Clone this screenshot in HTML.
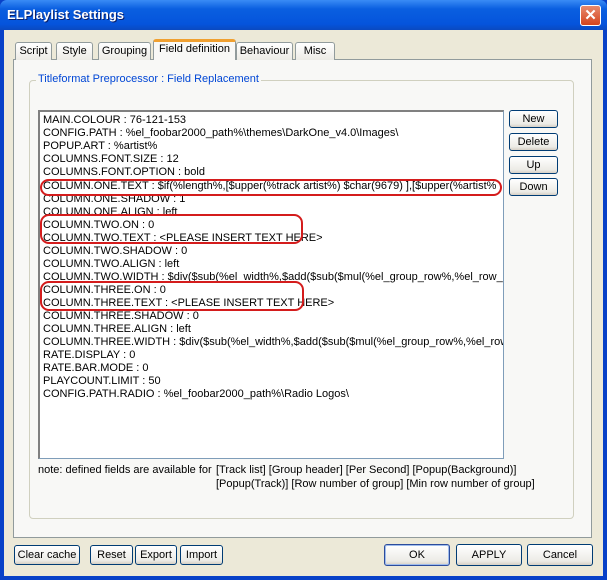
<!DOCTYPE html>
<html><head><style>
*{margin:0;padding:0;box-sizing:border-box}
body{width:607px;height:580px;background:#0841c8;font-family:"Liberation Sans",sans-serif;font-size:11px;position:relative;overflow:hidden}
.win{position:absolute;left:4px;top:30px;width:599px;height:546px;background:#ECE9D8}
.title{position:absolute;left:0;top:0;width:607px;height:30px;background:linear-gradient(#3a8cf5,#0a5fe0 30%,#0554dc 80%,#0a49c0);border-radius:7px 7px 0 0}
.title span{position:absolute;left:7px;top:7px;color:#fff;font-weight:bold;font-size:13px;text-shadow:1px 1px #0a1f6a}
.close{position:absolute;left:580px;top:5px;width:21px;height:21px;background:linear-gradient(#e88a6e,#d4441d);border:1px solid #fff;border-radius:3px;color:#fff;font-weight:bold;font-size:15px;text-align:center;line-height:19px}
.a{position:absolute}
.tab{position:absolute;top:42px;height:18px;border:1px solid #919b9c;border-bottom:none;background:linear-gradient(#fff,#ecebe5);border-radius:3px 3px 0 0;text-align:center;line-height:17px;font-size:11px}
.panel{position:absolute;left:13px;top:59px;width:579px;height:479px;border:1px solid #919b9c;background:#f8f8f6}
.grp{position:absolute;left:29px;top:80px;width:545px;height:439px;border:1px solid #d0d0bf;border-radius:4px}
.gl{position:absolute;left:36px;top:73px;background:#f8f8f6;color:#0046d5;padding:0 2px;font-size:11px}
.list{position:absolute;left:38px;top:110px;width:466px;height:349px;background:#fff;border:1px solid #7f9db9;border-left:2px solid #808080;border-top:2px solid #808080;overflow:hidden}
.list div{position:absolute;left:3px;white-space:nowrap;font-size:11px;line-height:13px}
.btn{position:absolute;border:1px solid #003c74;border-radius:3px;background:linear-gradient(#fff,#ecebe6 80%,#d6d0c5);text-align:center;font-size:11px;line-height:16px}
.bb{line-height:18px}
.ov{position:absolute;border:2px solid #d41c1c;border-radius:9px}
</style></head><body>
<div class="title"><span>ELPlaylist Settings</span></div>
<div class="close">✕</div>
<div class="win"></div>
<div class="panel"></div>
<div class="tab" style="left:15px;width:37px">Script</div>
<div class="tab" style="left:56px;width:37px">Style</div>
<div class="tab" style="left:98px;width:53px">Grouping</div>
<div class="tab" style="left:153px;width:83px;top:39px;height:21px;background:#f8f8f6;border-top:3px solid #f0a030;line-height:15px">Field definition</div>
<div class="tab" style="left:236px;width:57px">Behaviour</div>
<div class="tab" style="left:295px;width:40px">Misc</div>
<div class="grp"></div>
<div class="gl">Titleformat Preprocessor : Field Replacement</div>
<div class="list">
<div style="top:2px">MAIN.COLOUR : 76-121-153</div>
<div style="top:15px">CONFIG.PATH : %el_foobar2000_path%\themes\DarkOne_v4.0\Images\</div>
<div style="top:28px">POPUP.ART : %artist%</div>
<div style="top:41px">COLUMNS.FONT.SIZE : 12</div>
<div style="top:54px">COLUMNS.FONT.OPTION : bold</div>
<div style="top:68px">COLUMN.ONE.TEXT : $if(%length%,[$upper(%track artist%) $char(9679) ],[$upper(%artist%</div>
<div style="top:81px">COLUMN.ONE.SHADOW : 1</div>
<div style="top:94px">COLUMN.ONE.ALIGN : left</div>
<div style="top:107px">COLUMN.TWO.ON : 0</div>
<div style="top:120px">COLUMN.TWO.TEXT : &lt;PLEASE INSERT TEXT HERE&gt;</div>
<div style="top:133px">COLUMN.TWO.SHADOW : 0</div>
<div style="top:146px">COLUMN.TWO.ALIGN : left</div>
<div style="top:159px">COLUMN.TWO.WIDTH : $div($sub(%el_width%,$add($sub($mul(%el_group_row%,%el_row_</div>
<div style="top:172px">COLUMN.THREE.ON : 0</div>
<div style="top:185px">COLUMN.THREE.TEXT : &lt;PLEASE INSERT TEXT HERE&gt;</div>
<div style="top:198px">COLUMN.THREE.SHADOW : 0</div>
<div style="top:211px">COLUMN.THREE.ALIGN : left</div>
<div style="top:224px">COLUMN.THREE.WIDTH : $div($sub(%el_width%,$add($sub($mul(%el_group_row%,%el_row</div>
<div style="top:237px">RATE.DISPLAY : 0</div>
<div style="top:250px">RATE.BAR.MODE : 0</div>
<div style="top:263px">PLAYCOUNT.LIMIT : 50</div>
<div style="top:276px">CONFIG.PATH.RADIO : %el_foobar2000_path%\Radio Logos\</div>
</div>
<div class="ov" style="left:40px;top:179px;width:462px;height:17px"></div>
<div class="ov" style="left:40px;top:214px;width:263px;height:30px"></div>
<div class="ov" style="left:40px;top:281px;width:264px;height:30px"></div>
<div class="btn" style="left:509px;top:110px;width:49px;height:18px">New</div>
<div class="btn" style="left:509px;top:133px;width:49px;height:18px">Delete</div>
<div class="btn" style="left:509px;top:156px;width:49px;height:18px">Up</div>
<div class="btn" style="left:509px;top:178px;width:49px;height:18px">Down</div>
<div class="a" style="left:38px;top:464px">note: defined fields are available for</div>
<div class="a" style="left:216px;top:464px">[Track list] [Group header] [Per Second] [Popup(Background)]</div>
<div class="a" style="left:216px;top:478px">[Popup(Track)] [Row number of group] [Min row number of group]</div>
<div class="btn bb" style="left:14px;top:545px;width:66px;height:20px">Clear cache</div>
<div class="btn bb" style="left:90px;top:545px;width:43px;height:20px">Reset</div>
<div class="btn bb" style="left:135px;top:545px;width:42px;height:20px">Export</div>
<div class="btn bb" style="left:180px;top:545px;width:43px;height:20px">Import</div>
<div class="btn" style="left:384px;top:544px;width:66px;height:22px;line-height:20px;border-color:#2c4c9c;box-shadow:inset 0 0 0 1px #9fbcec">OK</div>
<div class="btn" style="left:456px;top:544px;width:66px;height:22px;line-height:20px">APPLY</div>
<div class="btn" style="left:527px;top:544px;width:66px;height:22px;line-height:20px">Cancel</div>
</body></html>
